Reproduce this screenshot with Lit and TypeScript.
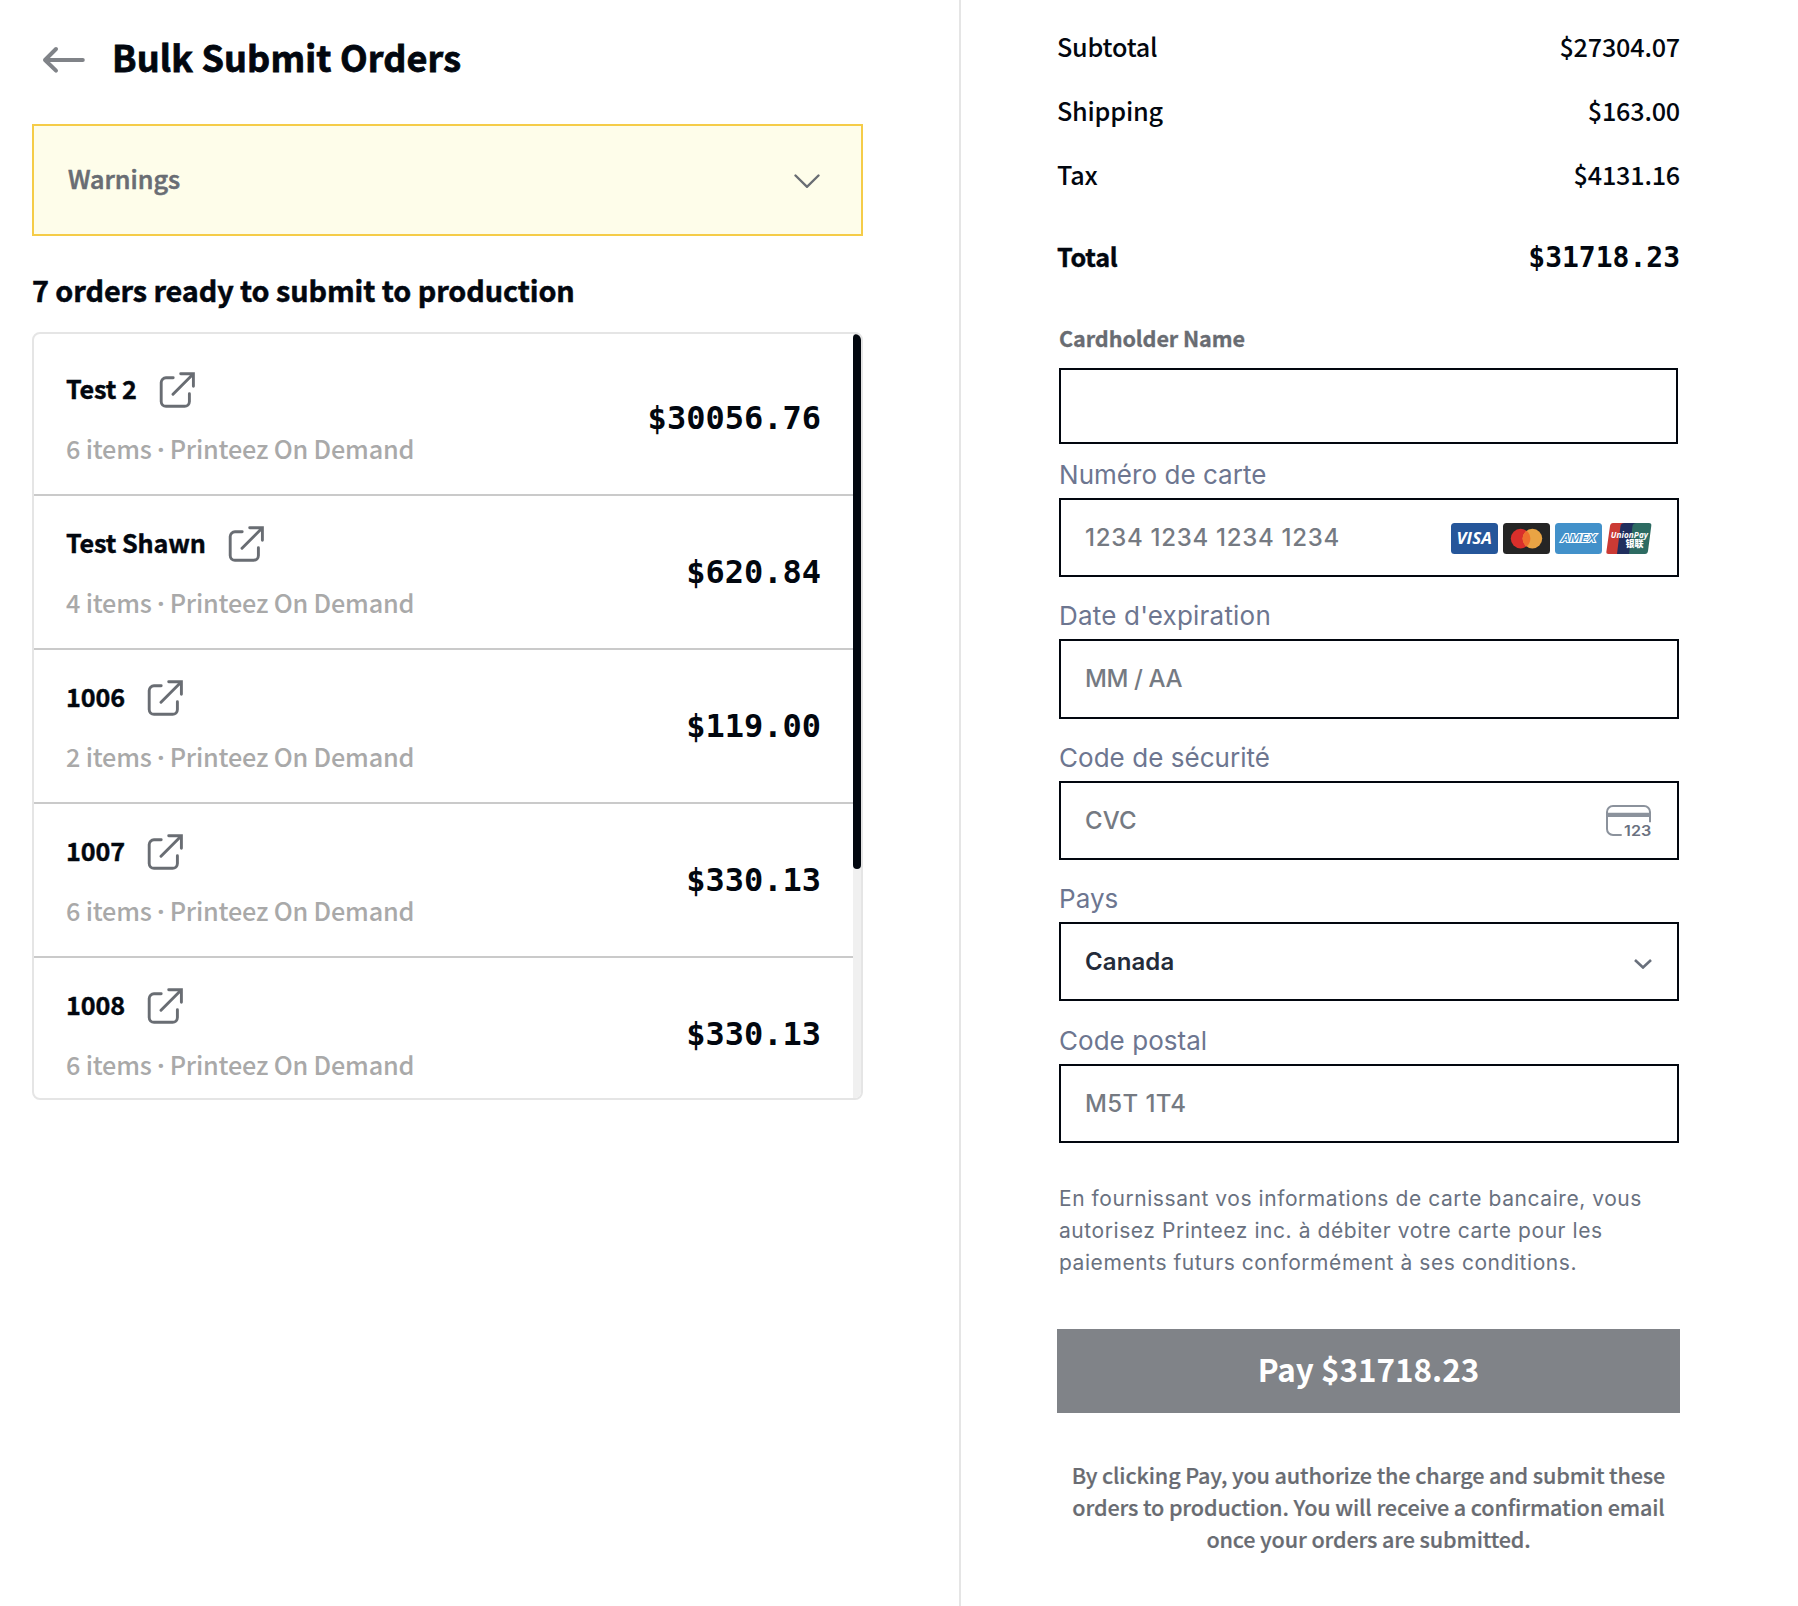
import {html, svg, LitElement, css} from 'lit';
import {customElement, property} from 'lit/decorators.js';

interface Order {
  name: string;
  items: number;
  price: string;
}

const vendor = 'Printeez On Demand';

const orders: Order[] = [
  {name: 'Test 2', items: 6, price: '$30056.76'},
  {name: 'Test Shawn', items: 4, price: '$620.84'},
  {name: '1006', items: 2, price: '$119.00'},
  {name: '1007', items: 6, price: '$330.13'},
  {name: '1008', items: 6, price: '$330.13'},
];

const costs = [
  {label: 'Subtotal', amount: '$27304.07'},
  {label: 'Shipping', amount: '$163.00'},
  {label: 'Tax', amount: '$4131.16'},
];

const total = '$31718.23';

@customElement('bs-order-row')
export class OrderRow extends LitElement {
  static styles = css`
    :host {
      display: flex;
      align-items: center;
      justify-content: space-between;
      box-sizing: border-box;
      height: 154px;
      padding: 0 32px;
      border-bottom: 2px solid #cacaca;
    }

    .info {
      display: flex;
      flex-direction: column;
      gap: 24px;
    }

    .title {
      display: flex;
      gap: 22.5px;
      height: 36px;
    }

    .name {
      font-weight: 700;
      line-height: 32px;
      letter-spacing: -0.12px;
      -webkit-text-stroke: 0.4px;
    }

    .meta {
      color: #a9a9a9;
      font-weight: 500;
      line-height: 32px;
      letter-spacing: -0.18px;
      white-space: pre;
    }

    .dot {
      font-family: 'Open Sans', sans-serif;
      font-weight: 700;
      line-height: 1;
    }

    .link {
      width: 37px;
      height: 37px;
      fill: none;
      stroke: #696d73;
      stroke-width: 2.9;
      stroke-linecap: round;
    }

    .price {
      font: 700 32px/40px 'DejaVu Sans Mono', monospace;
    }
  `;

  @property({attribute: false}) order!: Order;

  render() {
    const {name, items, price} = this.order;
    return html`
      <div class="info">
        <div class="title">
          <span class="name">${name}</span>
          <svg class="link" viewBox="0 0 37 37">
            <path
              d="M14.2 5.8H7a4.8 4.8 0 0 0-4.8 4.8v18.9A4.8 4.8 0 0 0 7 34.3h18.6a4.8 4.8 0 0 0 4.8-4.8v-7.8"
            />
            <path d="M14 22.2 34.2 2M21.7 1.8h12.7v12.5" />
          </svg>
        </div>
        <div class="meta">${items} items <span class="dot">·</span> ${vendor}</div>
      </div>
      <span class="price">${price}</span>
    `;
  }
}

@customElement('bs-card-brands')
export class CardBrands extends LitElement {
  static styles = css`
    :host {
      display: flex;
      gap: 5px;
    }

    svg {
      display: block;
      width: 47px;
      height: 31px;
      overflow: visible;
    }

    .union {
      width: 46px;
      margin-left: -1px;
    }

    text {
      font-family: 'Open Sans', sans-serif;
      font-weight: 800;
      fill: #fff;
    }

    .visa {
      font-size: 15.5px;
      font-style: italic;
      font-weight: 700;
    }

    .amex {
      font-size: 11.5px;
      font-style: italic;
      font-weight: 600;
      fill: #4291ca;
      stroke: #fff;
      stroke-width: 2px;
      paint-order: stroke;
    }

    .latin {
      font-size: 9px;
      font-style: italic;
      font-weight: 700;
    }

    .han {
      font-family: 'Noto Sans CJK SC', sans-serif;
      font-size: 9px;
      font-weight: 900;
    }
  `;

  render() {
    return html`
      <svg viewBox="0 0 47 31">
        <rect width="47" height="31" rx="3.5" fill="#25569a" />
        <text class="visa" x="5.5" y="21.3" textLength="35.5" lengthAdjust="spacingAndGlyphs">VISA</text>
      </svg>
      <svg viewBox="0 0 47 31">
        <rect width="47" height="31" rx="3.5" fill="#252525" />
        <circle cx="17.6" cy="15.6" r="9.8" fill="#d92f2b" />
        <circle cx="29.4" cy="15.6" r="9.8" fill="#e9a444" />
        <path d="M23.5 7.8a9.8 9.8 0 0 1 0 15.6 9.8 9.8 0 0 1 0-15.6z" fill="#ee6f2d" />
      </svg>
      <svg viewBox="0 0 47 31">
        <rect width="47" height="31" rx="3.5" fill="#4291ca" />
        <text class="amex" x="6.5" y="19.3" textLength="34" lengthAdjust="spacingAndGlyphs">AMEX</text>
      </svg>
      <svg class="union" viewBox="0 0 46 31">
        <path d="M7 0h12l-4 31H2.5Q0 31 .4 28.5L4 3Q4.5 0 7 0z" fill="#cb3a34" />
        <path d="M18.5 0H31l-4.5 31H11l3.5-28Q15 0 18.5 0z" fill="#202f5e" />
        <path d="M31 0h12q2.7 0 2.3 2.7L42 28q-.4 3-3 3H23l3.5-28Q27 0 31 0z" fill="#2d6b62" />
        <text class="latin" x="4.7" y="15" textLength="37.5" lengthAdjust="spacingAndGlyphs">UnionPay</text>
        <text class="han" x="19.5" y="24.3">银联</text>
      </svg>
    `;
  }
}

const cvcIcon = svg`
  <path
    d="M15.7 30H7a6 6 0 0 1-6-6V7a6 6 0 0 1 6-6h31a6 6 0 0 1 6 6v10.3"
    fill="none"
    stroke="#8b929c"
    stroke-width="2"
  />
  <path d="M1 7.7h43V12H1z" fill="#8b929c" />
  <text class="digits" x="18" y="31" textLength="27.5" lengthAdjust="spacingAndGlyphs">123</text>
`;

@customElement('app-root')
export class AppRoot extends LitElement {
  static styles = css`
    :host {
      display: grid;
      grid-template-columns: 959px 1fr;
      height: 1606px;
      overflow: hidden;
      background: #fff;
      color: #02070f;
      font: 500 25.2px/32px 'Noto Sans CJK SC', sans-serif;
    }

    .left {
      padding: 28px 96px 0 32px;
    }

    .header {
      display: flex;
      align-items: center;
      gap: 27px;
      height: 56px;
      padding-left: 9px;
    }

    .back {
      width: 44px;
      height: 28px;
      margin-top: 8px;
      fill: none;
      stroke: #808388;
      stroke-width: 4;
      stroke-linecap: round;
      stroke-linejoin: round;
    }

    h1 {
      margin: 0;
      font-size: 36px;
      line-height: 56px;
      letter-spacing: 0.14px;
      -webkit-text-stroke: 0.8px;
    }

    .warnings {
      display: flex;
      align-items: center;
      justify-content: space-between;
      box-sizing: border-box;
      height: 112px;
      margin-top: 40px;
      padding: 0 41px 0 34px;
      border: 2px solid #f5cc48;
      background: #fefdea;
      color: #696d73;
    }

    .warnings-label {
      padding-bottom: 4px;
      -webkit-text-stroke: 0.6px;
    }

    .chevron {
      width: 26px;
      height: 14px;
      margin-top: 2px;
      fill: none;
      stroke: #696d73;
      stroke-width: 2.4;
      stroke-linecap: round;
    }

    h2 {
      margin: 34px 0 22px;
      font-size: 28.8px;
      line-height: 40px;
      letter-spacing: -0.08px;
      -webkit-text-stroke: 0.5px;
    }

    .orders {
      display: grid;
      grid-template-columns: 1fr 8px;
      box-sizing: border-box;
      height: 768px;
      overflow: hidden;
      border: 2px solid #e5e5e5;
      border-radius: 8px;
    }

    .list {
      padding-top: 8px;
    }

    .track {
      height: 764px;
      background: #f0f0f0;
    }

    .thumb {
      height: 535px;
      border-radius: 4px;
      background: #02070f;
    }

    .right {
      padding: 30px 118px 0 96px;
      border-left: 2px solid #e5e5e5;
    }

    .costs {
      display: flex;
      flex-direction: column;
      gap: 32px;
      letter-spacing: -0.2px;
    }

    .cost {
      display: flex;
      justify-content: space-between;
      height: 32px;
    }

    .total {
      margin-top: 18px;
      align-items: baseline;
      font-weight: 700;
      -webkit-text-stroke: 0.4px;
    }

    .total-price {
      font: 700 28px/32px 'DejaVu Sans Mono', monospace;
      letter-spacing: 0;
      -webkit-text-stroke: 0;
    }

    .form {
      padding: 52px 1px 0 2px;
      font-family: Inter, sans-serif;
    }

    .cardholder {
      margin-bottom: 16px;
      color: #696c72;
      font: 700 21.6px/28px 'Noto Sans CJK SC', sans-serif;
      letter-spacing: -0.08px;
      -webkit-text-stroke: 0.3px;
    }

    .field {
      margin-top: 23.2px;
    }

    .field.first {
      margin-top: 15px;
    }

    .label {
      display: block;
      margin-bottom: 7px;
      color: #6d7690;
      font-size: 26px;
      font-weight: 400;
      line-height: 32px;
      letter-spacing: 0.04px;
    }

    .label.wide {
      letter-spacing: 0.2px;
    }

    .input {
      display: flex;
      align-items: center;
      justify-content: space-between;
      box-sizing: border-box;
      height: 79.2px;
      padding: 1px 25px 0 24px;
      border: 2px solid #02070f;
      color: #757a82;
      font-size: 24px;
      letter-spacing: 0.1px;
    }

    .input.holder {
      height: 76px;
      margin-right: 1px;
    }

    .number {
      letter-spacing: 0.71px;
    }

    .expiry {
      letter-spacing: -0.4px;
    }

    .postal {
      letter-spacing: 0.4px;
    }

    .country {
      color: #242b3a;
      font-weight: 600;
      letter-spacing: 0.1px;
    }

    .cvc {
      width: 46px;
      height: 32px;
      overflow: visible;
    }

    .digits {
      fill: #6a7180;
      font: 600 14.8px Inter, sans-serif;
    }

    .select-arrow {
      width: 18px;
      height: 10px;
      margin-top: 4px;
      fill: none;
      stroke: #69707c;
      stroke-width: 2.6;
    }

    .terms {
      margin: 40.6px 0 0;
      color: #69717f;
      font-size: 21px;
      font-weight: 400;
      line-height: 32px;
      letter-spacing: 0.56px;
    }

    .pay {
      display: block;
      width: 100%;
      height: 84px;
      margin: 49.6px 0 0;
      padding: 0 0 4px;
      border: 0;
      background: #808388;
      color: #fff;
      font: 700 31.4px/40px 'Noto Sans CJK SC', sans-serif;
    }

    .notice {
      margin: 46.4px 0 0;
      color: #696c72;
      font-size: 21.6px;
      letter-spacing: -0.14px;
      text-align: center;
      -webkit-text-stroke: 0.2px;
    }
  `;

  render() {
    return html`
      <section class="left">
        <header class="header">
          <svg class="back" viewBox="0 0 44 28">
            <path d="M4 14h37.8M15 3 4 14l11 10.600" />
          </svg>
          <h1>Bulk Submit Orders</h1>
        </header>
        <div class="warnings">
          <span class="warnings-label">Warnings</span>
          <svg class="chevron" viewBox="0 0 26 14"><path d="m1.500 1.500 11.500 11.300L24.500 1.500" /></svg>
        </div>
        <h2>7 orders ready to submit to production</h2>
        <div class="orders">
          <div class="list">
            ${orders.map((order) => html`<bs-order-row .order=${order}></bs-order-row>`)}
          </div>
          <div class="track"><div class="thumb"></div></div>
        </div>
      </section>

      <section class="right">
        <div class="costs">
          ${costs.map(
            ({label, amount}) => html`<div class="cost"><span>${label}</span><span>${amount}</span></div>`
          )}
          <div class="cost total"><span>Total</span><span class="total-price">${total}</span></div>
        </div>

        <div class="form">
          <div class="cardholder">Cardholder Name</div>
          <div class="input holder"></div>
          <div class="field first">
            <span class="label">Numéro de carte</span>
            <div class="input">
              <span class="number">1234 1234 1234 1234</span>
              <bs-card-brands></bs-card-brands>
            </div>
          </div>
          <div class="field">
            <span class="label wide">Date d'expiration</span>
            <div class="input"><span class="expiry">MM / AA</span></div>
          </div>
          <div class="field">
            <span class="label">Code de sécurité</span>
            <div class="input">
              <span>CVC</span>
              <svg class="cvc" viewBox="0 0 46 32">${cvcIcon}</svg>
            </div>
          </div>
          <div class="field">
            <span class="label">Pays</span>
            <div class="input">
              <span class="country">Canada</span>
              <svg class="select-arrow" viewBox="0 0 18 10"><path d="m1 1 8 7.500L17 1" /></svg>
            </div>
          </div>
          <div class="field">
            <span class="label">Code postal</span>
            <div class="input"><span class="postal">M5T 1T4</span></div>
          </div>
          <p class="terms">
            En fournissant vos informations de carte bancaire, vous autorisez Printeez inc. à débiter votre
            carte pour les paiements futurs conformément à ses conditions.
          </p>
        </div>

        <button class="pay">Pay ${total}</button>
        <p class="notice">
          By clicking Pay, you authorize the charge and submit these orders to production. You will receive
          a confirmation email once your orders are submitted.
        </p>
      </section>
    `;
  }
}
